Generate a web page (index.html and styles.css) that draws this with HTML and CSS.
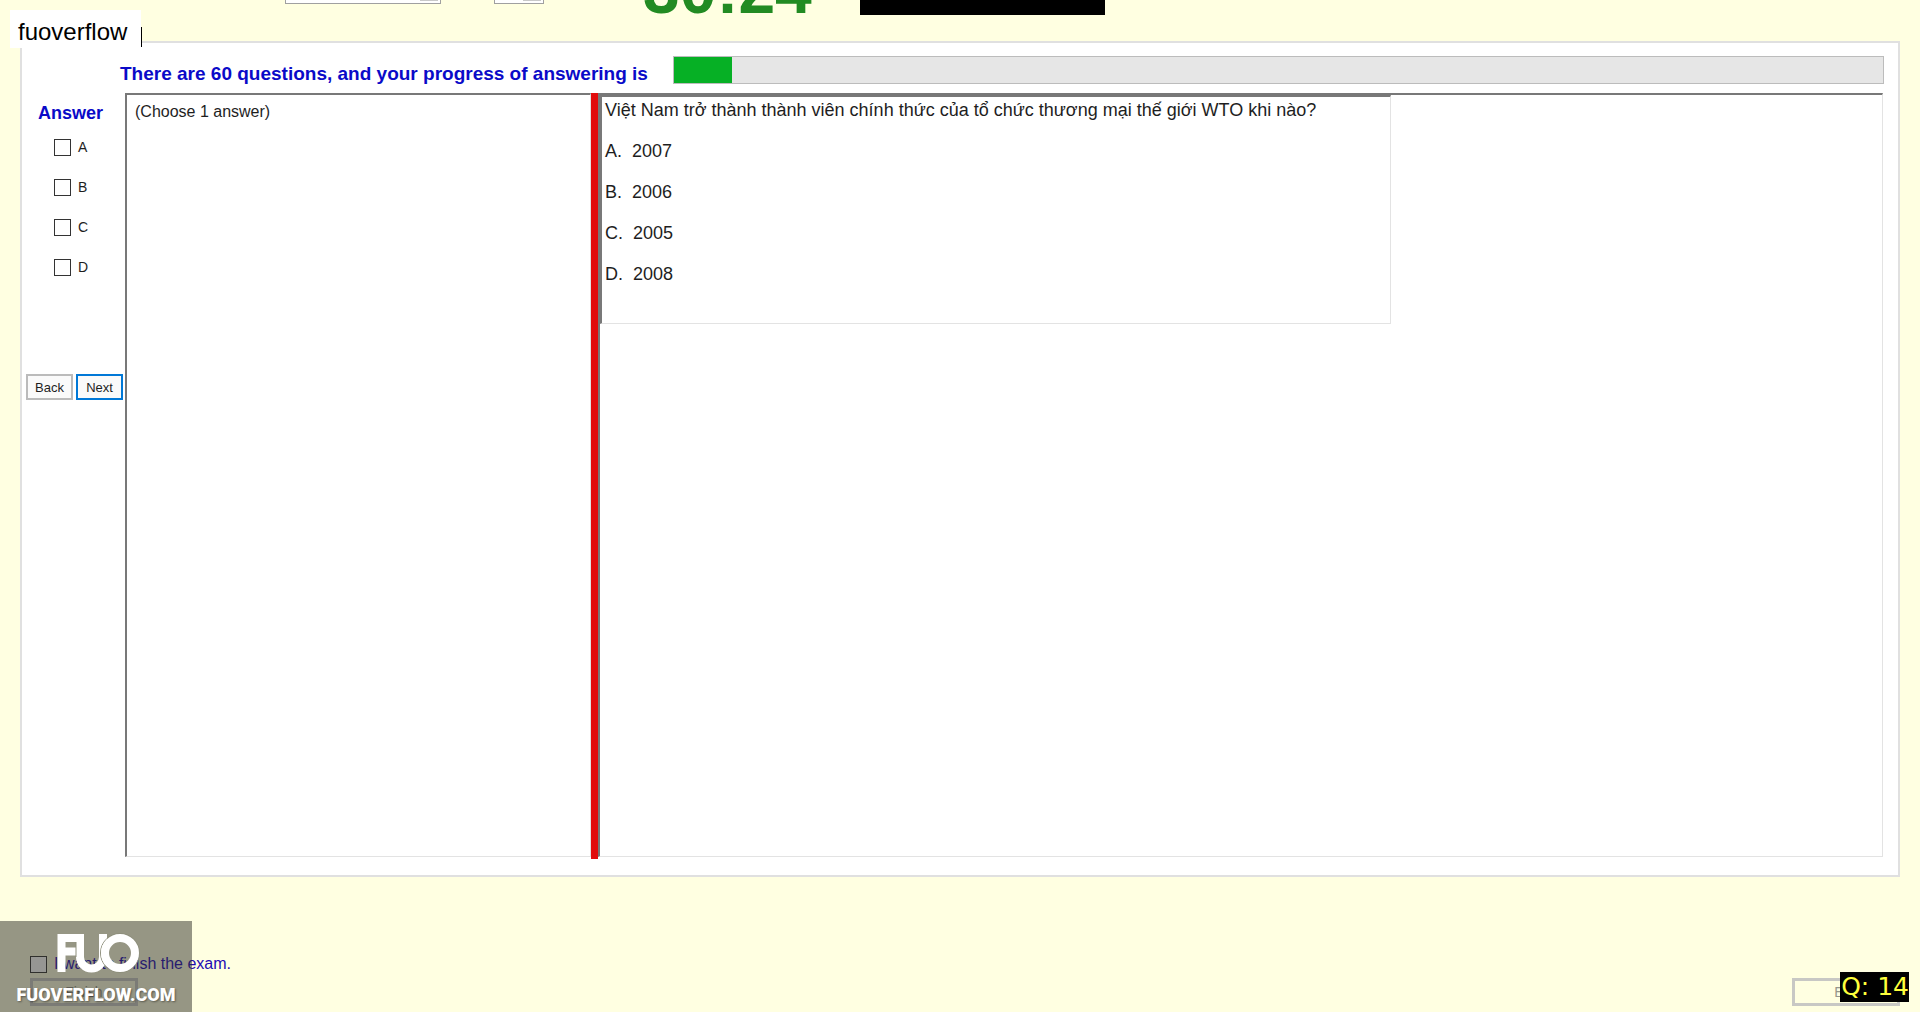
FILE: index.html
```html
<!doctype html>
<html lang="vi">
<head>
    <meta charset="UTF-8">
    <meta name="viewport" content="width=device-width, initial-scale=1.0">
    <title>Exam</title>
    <link rel="stylesheet" href="styles.css">
</head>
<body>
<header class="top">
    <select class="top__select" aria-label="Font"><option></option></select>
    <select class="top__select top__select_small" aria-label="Size"><option></option></select>
    <div class="top__timer">30:24</div>
    <div class="top__screen"></div>
</header>

<main class="exam">
    <div class="progress">
        <div class="progress__text" id="progressText">There are 60 questions, and your progress of answering is</div>
        <div class="progress__bar" role="progressbar" aria-labelledby="progressText">
            <div class="progress__value"></div>
        </div>
    </div>
    <div class="exam__body">
        <div class="answer">
            <div class="answer__title">Answer</div>
            <div class="answer__list">
                <label class="answer__item"><input class="check" type="checkbox">A</label>
                <label class="answer__item"><input class="check" type="checkbox">B</label>
                <label class="answer__item"><input class="check" type="checkbox">C</label>
                <label class="answer__item"><input class="check" type="checkbox">D</label>
            </div>
            <div class="answer__nav">
                <button class="btn" type="button">Back</button>
                <button class="btn btn_active" type="button">Next</button>
            </div>
        </div>
        <div class="hint">(Choose 1 answer)</div>
        <div class="splitter"></div>
        <div class="view">
            <div class="question">
                <p class="question__row">Việt Nam trở thành thành viên chính thức của tổ chức thương mại thế giới WTO khi nào?</p>
                <p class="question__row">A.&nbsp; 2007</p>
                <p class="question__row">B.&nbsp; 2006</p>
                <p class="question__row">C.&nbsp; 2005</p>
                <p class="question__row">D.&nbsp; 2008</p>
            </div>
        </div>
    </div>
</main>

<footer class="bottom">
    <label class="bottom__finish"><input class="check" type="checkbox">I want to finish the exam.</label>
    <div class="bottom__buttons">
        <button class="bottom__btn" type="button" disabled>Finish</button>
        <button class="bottom__btn" type="button" disabled>Exit</button>
    </div>
</footer>

<div class="tag">fuoverflow</div>

<div class="watermark">
    <svg class="watermark__logo" viewBox="0 0 84 42" aria-hidden="true">
        <path d="M5.5 39V5H24M5 18.5H20" fill="none" stroke="#fff" stroke-width="8"/>
        <path d="M24 1V24A11.5 11.5 0 0 0 47 24V1" fill="none" stroke="#fff" stroke-width="8"/>
        <path d="M20 9V24" stroke="#8e8f7c" stroke-width="1"/>
        <circle cx="64" cy="20" r="19.5" fill="none" stroke="#8e8f7c" stroke-width="1"/>
        <circle cx="64" cy="20" r="15" fill="none" stroke="#fff" stroke-width="8"/>
    </svg>
    <div class="watermark__text">FUOVERFLOW.COM</div>
</div>

<div class="counter">Q: 14</div>
</body>
</html>
```
FILE: styles.css
```css
* {
    box-sizing: border-box;
}

body {
    display: flex;
    flex-direction: column;
    min-height: 100vh;
    margin: 0;
    background-color: #ffffe1;
    font-family: "Liberation Sans", Arial, sans-serif;
    font-size: 16px;
    color: #1e1e1e;
    overflow: hidden;
}

.top {
    display: flex;
    align-items: flex-end;
    height: 16px;
    padding-left: 285px;
    margin-bottom: 25px;
}

.top__select {
    appearance: none;
    align-self: flex-start;
    width: 156px;
    height: 24px;
    margin-top: -20px;
    margin-right: 53px;
    background: linear-gradient(#c8c8c8, #c8c8c8) no-repeat right 2px top / 18px 20px #fff;
    border: 1px solid #a0a0a0;
    border-radius: 0;
}

.top__select_small {
    width: 50px;
    margin-right: 99px;
}

.top__timer {
    width: 169px;
    padding-bottom: 4px;
    line-height: 44px;
    font-size: 66px;
    font-weight: 700;
    color: #228b22;
}

.top__screen {
    width: 245px;
    height: 15px;
    margin-left: 48px;
    align-self: flex-start;
    background-color: #000;
}

.exam {
    display: flex;
    flex-direction: column;
    flex-grow: 1;
    margin: 0 20px;
    padding: 13px 14px 18px 4px;
    background-color: #fff;
    border: 2px solid #e0e0e0;
}

.progress {
    display: flex;
    padding-left: 94px;
    margin-bottom: 9px;
}

.progress__text {
    width: 553px;
    padding-top: 8px;
    line-height: 20px;
    font-size: 19px;
    font-weight: 700;
    color: #0a0ac8;
    white-space: nowrap;
}

.progress__bar {
    flex-grow: 1;
    height: 28px;
    background-color: #e6e6e6;
    border: 1px solid #bcbcbc;
}

.progress__value {
    width: 58px;
    height: 100%;
    background-color: #06b025;
}

.exam__body {
    display: flex;
    flex-grow: 1;
}

.answer {
    width: 99px;
    flex-shrink: 0;
}

.answer__title {
    padding: 10px 0 0 12px;
    line-height: 20px;
    font-size: 18px;
    font-weight: 700;
    color: #0a0ac8;
}

.answer__list {
    padding: 14px 0 0 28px;
}

.answer__item {
    display: flex;
    align-items: center;
    gap: 7px;
    height: 20px;
    margin-bottom: 20px;
    line-height: 20px;
    font-size: 14px;
}

.check {
    appearance: none;
    width: 17px;
    height: 17px;
    margin: 0;
    background-color: #fff;
    border: 1px solid #333;
}

.answer__nav {
    display: flex;
    gap: 3px;
    padding-top: 77px;
}

.btn {
    width: 47px;
    height: 26px;
    padding: 0;
    background-color: #fafafa;
    border: 2px solid #bbb;
    font-family: inherit;
    font-size: 13px;
    color: #1e1e1e;
}

.btn_active {
    border-color: #0078d7;
}

.hint {
    width: 466px;
    flex-shrink: 0;
    padding: 7px 8px;
    line-height: 20px;
    border: 1px solid #e3e3e3;
    border-top: 2px solid #787878;
    border-left: 2px solid #787878;
}

.splitter {
    width: 7px;
    flex-shrink: 0;
    margin-bottom: -2px;
    background-color: #e10c0c;
}

.view {
    flex-grow: 1;
    border: 1px solid #e3e3e3;
    border-top: 2px solid #787878;
    border-left: 2px solid #787878;
    margin-right: 1px;
}

.question {
    width: 791px;
    padding: 3px 3px 18px;
    border: 1px solid #e3e3e3;
    border-top: 2px solid #787878;
    border-left: 2px solid #787878;
}

.question__row {
    margin: 0 0 20px;
    line-height: 21px;
    font-size: 18px;
}

.bottom {
    height: 135px;
    padding: 77px 20px 0 30px;
}

.bottom__finish {
    display: flex;
    align-items: center;
    gap: 7px;
    height: 20px;
    line-height: 20px;
    color: #1e0ab4;
}

.bottom__buttons {
    display: flex;
    justify-content: space-between;
    padding-top: 4px;
}

.bottom__btn {
    width: 108px;
    height: 28px;
    background-color: transparent;
    border: 3px solid #c8c8c4;
    font-family: inherit;
    font-size: 14px;
    color: #96968c;
}

.tag {
    position: absolute;
    top: 10px;
    left: 10px;
    width: 131px;
    height: 38px;
    padding-left: 8px;
    line-height: 44px;
    background-color: #fff;
    font-size: 24px;
    color: #000;
}

/* text caret */
.tag::after {
    content: "";
    position: absolute;
    top: 17px;
    right: -1px;
    width: 1px;
    height: 20px;
    background-color: #000;
}

.watermark {
    position: absolute;
    left: 0;
    bottom: 0;
    width: 192px;
    height: 91px;
    background-color: rgba(45, 45, 40, 0.5);
    color: #fff;
    text-align: center;
}

.watermark__logo {
    display: block;
    width: 84px;
    height: 42px;
    margin: 12px 0 0 56px;
}

.watermark__text {
    padding-top: 8px;
    line-height: 24px;
    font-family: Roboto, "Liberation Sans", sans-serif;
    font-size: 18px;
    font-weight: 900;
    text-shadow: 1px 1px 2px rgba(0, 0, 0, 0.4);
}

.counter {
    position: absolute;
    right: 11px;
    bottom: 10px;
    height: 30px;
    line-height: 30px;
    padding-left: 1px;
    background-color: #000;
    font-family: "DejaVu Sans", sans-serif;
    font-size: 25px;
    color: #ffff3c;
}
```
